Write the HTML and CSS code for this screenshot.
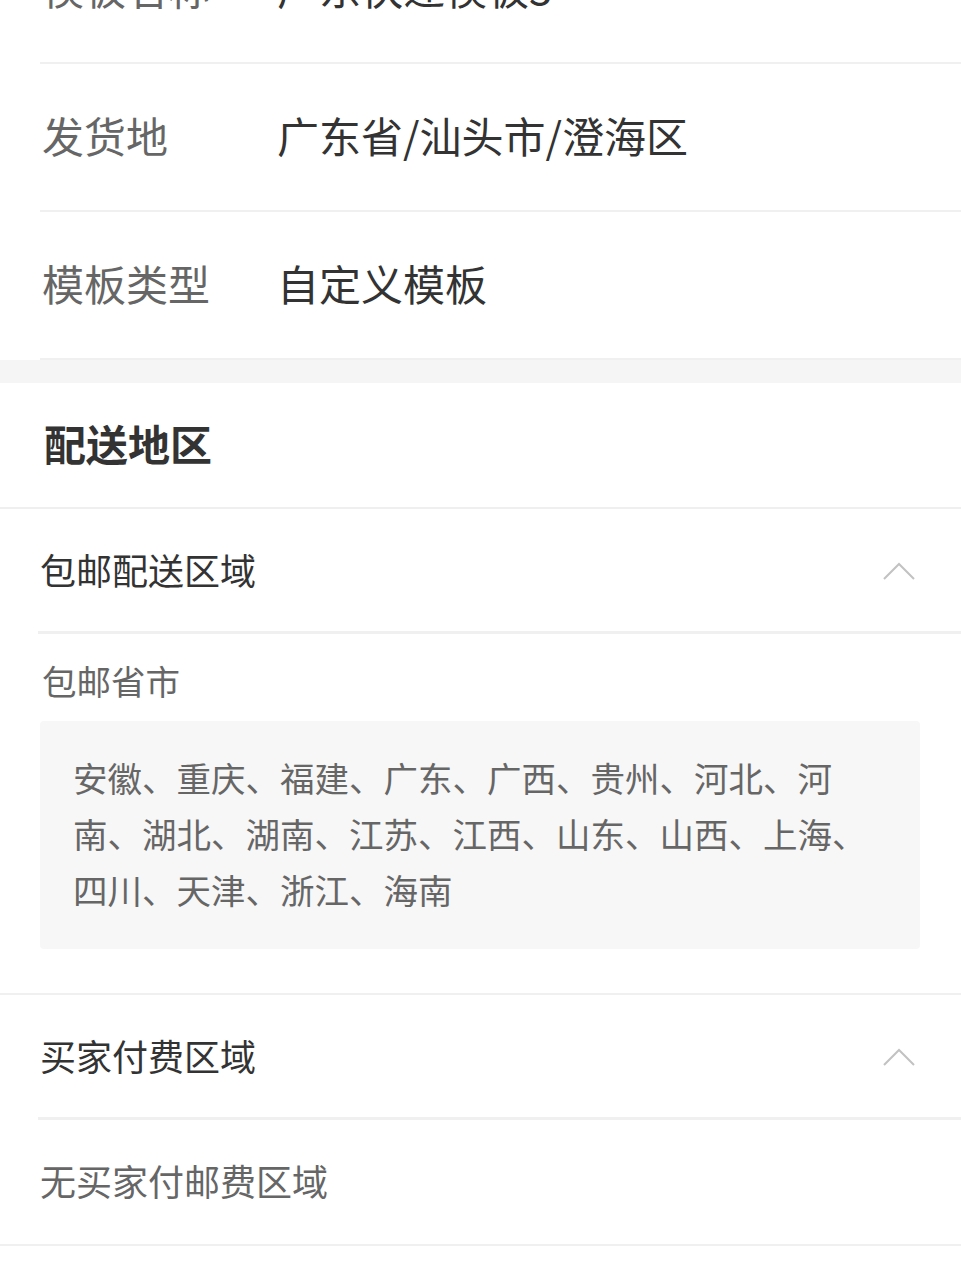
FILE: index.html
```html
<!DOCTYPE html>
<html lang="zh-CN">
<head>
  <meta charset="UTF-8">
  <meta name="viewport" content="width=device-width, initial-scale=1.0">
  <title>运费模板详情</title>
  <link rel="stylesheet" href="styles.css">
</head>
<body>
  <div class="info">
    <div class="info-row">
      <div class="label">模板名称</div>
      <div class="value">广东快递模板3</div>
    </div>
    <div class="info-row">
      <div class="label">发货地</div>
      <div class="value">广东省/汕头市/澄海区</div>
    </div>
    <div class="info-row">
      <div class="label">模板类型</div>
      <div class="value">自定义模板</div>
    </div>
  </div>

  <div class="gap"></div>

  <div class="area">
    <div class="area-title">配送地区</div>

    <div class="fold-head">
      <span>包邮配送区域</span>
      <svg class="arrow" width="32" height="18" viewBox="0 0 32 18">
        <polyline points="1,17 16,2 31,17" fill="none" stroke="#c2c2c2" stroke-width="2"/>
      </svg>
    </div>
    <div class="fold-body">
      <div class="sub-label">包邮省市</div>
      <div class="region-box">安徽、重庆、福建、广东、广西、贵州、河北、河南、湖北、湖南、江苏、江西、山东、山西、上海、四川、天津、浙江、海南</div>
    </div>

    <div class="fold-head">
      <span>买家付费区域</span>
      <svg class="arrow" width="32" height="18" viewBox="0 0 32 18">
        <polyline points="1,17 16,2 31,17" fill="none" stroke="#c2c2c2" stroke-width="2"/>
      </svg>
    </div>
    <div class="empty">无买家付邮费区域</div>
  </div>
</body>
</html>
```

FILE: styles.css
```css
body {
  font-family: "Noto Sans CJK SC", "Noto Sans", sans-serif;
  margin: 0;
  background-color: #fff;
  color: #333;
}
.info {
  margin-top: -84px;
}
.info-row {
  display: flex;
  align-items: center;
  height: 140px;
  padding-bottom: 6px;
  margin-left: 40px;
  border-bottom: 2px solid #f0f0f0;
  font-size: 42px;
}
.label {
  width: 235px;
  padding-left: 2px;
  color: #666;
}
.value {
  color: #333;
}
.value-slash {
  padding: 0 2px;
}
.gap {
  height: 23px;
  background-color: #f5f5f5;
}
.area-title {
  display: flex;
  align-items: center;
  height: 118px;
  padding-bottom: 6px;
  padding-left: 44px;
  font-size: 42px;
  font-weight: bold;
  color: #333;
  border-bottom: 2px solid #efefef;
}
.fold-head {
  display: flex;
  justify-content: space-between;
  align-items: center;
  height: 120px;
  padding-bottom: 2px;
  margin-left: 38px;
  padding-left: 2px;
  padding-right: 46px;
  font-size: 36px;
  color: #333;
  border-bottom: 3px solid #f0f0f0;
}
.arrow {
  display: block;
  margin-top: 4px;
}
.fold-body {
  padding: 21px 41px 44px 40px;
  border-bottom: 2px solid #f0f0f0;
}
.sub-label {
  padding-left: 2px;
  font-size: 34.5px;
  line-height: 50px;
  color: #666;
}
.region-box {
  margin-top: 16px;
  padding: 28px 33px 32px;
  background-color: #f7f7f7;
  border-radius: 4px;
  font-size: 34.5px;
  line-height: 56px;
  color: #666;
}
.empty {
  display: flex;
  align-items: center;
  height: 120px;
  padding-bottom: 4px;
  padding-left: 40px;
  font-size: 36px;
  color: #666;
  border-bottom: 2px solid #f0f0f0;
}
```
